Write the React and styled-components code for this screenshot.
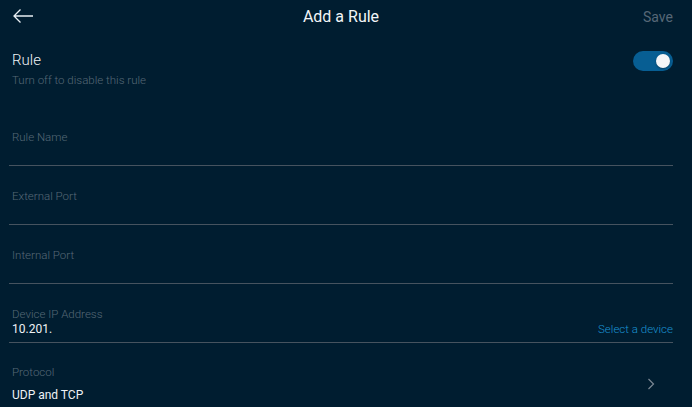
import React from 'react';
import styled, { createGlobalStyle } from 'styled-components';

const GlobalStyle = createGlobalStyle`
  html, body {
    margin: 0;
    background: #001d30;
  }
  body {
    font-family: Roboto, "Noto Sans", sans-serif;
    -webkit-font-smoothing: antialiased;
  }
`;

const Page = styled.div`
  width: 692px;
  height: 407px;
  overflow: hidden;
  background: #001d30;
  color: #e8eef2;
  padding: 0 19px 0 9px;
  box-sizing: border-box;
`;

const Header = styled.header`
  height: 32px;
  display: grid;
  grid-template-columns: 60px 1fr 60px;
  align-items: center;
`;

const BackButton = styled.button`
  background: none;
  border: 0;
  padding: 0 0 0 3px;
  display: flex;
  align-items: center;
  cursor: pointer;
`;

const Title = styled.h1`
  margin: 0;
  text-align: center;
  font-size: 16px;
  font-weight: 400;
  color: #f2f5f7;
`;

const SaveButton = styled.button`
  background: none;
  border: 0;
  padding: 0;
  justify-self: end;
  font-family: inherit;
  font-size: 14px;
  font-weight: 400;
  color: #566776;
  margin-top: 2px;
`;

const RuleRow = styled.div`
  height: 75px;
  display: flex;
  justify-content: space-between;
  align-items: flex-start;
  padding: 19px 0 0 3px;
  box-sizing: border-box;
`;

const RuleTitle = styled.div`
  font-size: 15px;
  line-height: 18px;
  font-weight: 300;
  color: #eef2f5;
`;

const RuleHint = styled.div`
  margin-top: 4px;
  font-size: 11.5px;
  line-height: 14px;
  font-weight: 300;
  color: #566876;
`;

const Toggle = styled.div`
  width: 40px;
  height: 20px;
  border-radius: 10px;
  background: ${p => (p.$on ? '#075e93' : '#3a4854')};
  display: flex;
  align-items: center;
  justify-content: ${p => (p.$on ? 'flex-end' : 'flex-start')};
  padding: 0 3px;
  box-sizing: border-box;
`;

const Knob = styled.div`
  width: 14px;
  height: 14px;
  border-radius: 50%;
  background: #f4f6f8;
  box-shadow: 0 1px 2px rgba(0, 0, 0, 0.35);
`;

const Field = styled.div`
  height: 59px;
  padding: 23px 0 0 3px;
  box-sizing: border-box;
  border-bottom: 1px solid #46535f;
`;

const Label = styled.div`
  font-size: 11.5px;
  line-height: 14px;
  font-weight: 300;
  color: #566876;
`;

const ValueRow = styled.div`
  display: flex;
  justify-content: space-between;
  align-items: center;
  margin-top: ${p => p.$gap || 1}px;
`;

const Value = styled.div`
  font-size: 12px;
  line-height: 15px;
  font-weight: 400;
  color: #eef2f5;
`;

const LinkText = styled.span`
  font-size: 11.5px;
  line-height: 15px;
  font-weight: 300;
  color: #1a93d2;
`;

const ProtocolField = styled.div`
  padding: 22px 0 0 3px;
  display: flex;
  justify-content: space-between;
  align-items: center;
`;

const Chevron = styled.svg`
  margin-right: 18px;
`;

const inputs = ['Rule Name', 'External Port', 'Internal Port'];

export default function App() {
  return (
    <>
      <GlobalStyle />
      <Page>
        <Header>
          <BackButton aria-label="Back">
            <svg width="22" height="16" viewBox="0 0 22 16" fill="none">
              <path d="M21 8H2M8.5 1.5L2 8l6.5 6.5" stroke="#e8eef2" strokeWidth="1.3" />
            </svg>
          </BackButton>
          <Title>Add a Rule</Title>
          <SaveButton>Save</SaveButton>
        </Header>

        <RuleRow>
          <div>
            <RuleTitle>Rule</RuleTitle>
            <RuleHint>Turn off to disable this rule</RuleHint>
          </div>
          <Toggle $on>
            <Knob />
          </Toggle>
        </RuleRow>

        {inputs.map(name => (
          <Field key={name}>
            <Label>{name}</Label>
          </Field>
        ))}

        <Field>
          <Label>Device IP Address</Label>
          <ValueRow>
            <Value>10.201.</Value>
            <LinkText>Select a device</LinkText>
          </ValueRow>
        </Field>

        <ProtocolField>
          <div>
            <Label>Protocol</Label>
            <ValueRow $gap={9}>
              <Value>UDP and TCP</Value>
            </ValueRow>
          </div>
          <Chevron width="8" height="12" viewBox="0 0 8 12" fill="none">
            <path d="M1.5 1l5 5-5 5" stroke="#7b8894" strokeWidth="1.2" />
          </Chevron>
        </ProtocolField>
      </Page>
    </>
  );
}
